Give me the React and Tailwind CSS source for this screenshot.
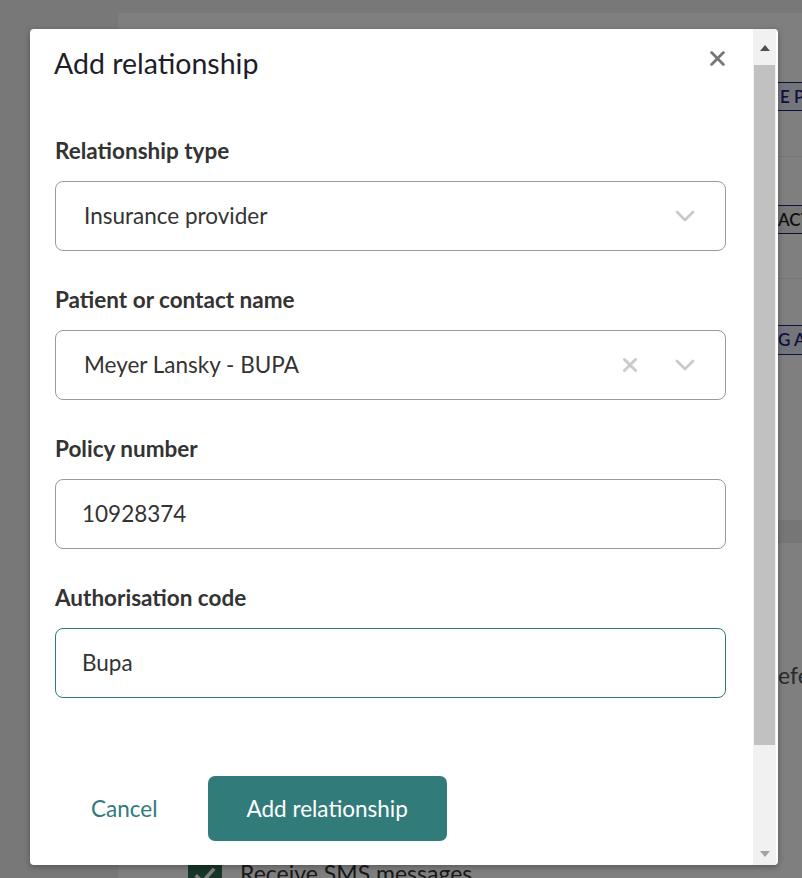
import React from "react";

const Chevron = () => (
  <svg width="20" height="12" viewBox="0 0 20 12" fill="none">
    <path d="M2 2l8 8 8-8" stroke="#c9c9c9" strokeWidth="2.6" strokeLinecap="round" strokeLinejoin="round" />
  </svg>
);

const Cross = ({ size = 14, color = "#777", width = 2.6 }) => (
  <svg width={size} height={size} viewBox="0 0 14 14" fill="none">
    <path d="M1.5 1.5l11 11M12.5 1.5l-11 11" stroke={color} strokeWidth={width} strokeLinecap="round" />
  </svg>
);

const Field = ({ label, children, focused }) => (
  <div className="flex flex-col">
    <label className="h-[30px] leading-[30px] text-[22.5px] font-bold text-[#333]">{label}</label>
    <div
      className={`mt-[15px] h-[70px] rounded-[8px] border flex items-center ${
        focused ? "border-[#2f7a78]" : "border-[#9a9a9a]"
      }`}
    >
      {children}
    </div>
  </div>
);

const Background = () => (
  <div className="ml-[118px] mt-[13px] bg-white text-[#1a237e]">
    <div className="h-[144px] border-b border-[#ececec] pt-[69px] pl-[660px]">
      <span className="inline-block h-[29px] leading-[27px] border-y border-[#1a237e] bg-[#e8eaf6] pl-[2px] pr-4 text-[17px] font-semibold whitespace-nowrap">E PAY</span>
    </div>
    <div className="h-[122px] border-b border-[#ececec] pt-[48px] pl-[648px]">
      <span className="inline-block h-[29px] leading-[27px] border-y border-[#1a237e] bg-[#eeeeee] pl-[12px] pr-4 text-[17px] font-semibold whitespace-nowrap text-[#222]">ACTIVE</span>
    </div>
    <div className="h-[241px] pt-[46px] pl-[658px]">
      <span className="inline-block h-[30px] leading-[28px] border-y border-[#1a237e] bg-[#e8eaf6] pl-[2px] pr-4 text-[17px] font-semibold whitespace-nowrap">G AGENT</span>
    </div>
    <div className="h-[23px] bg-[#ededed]" />
    <div className="h-[314px] pt-[115px] pl-[660px] text-[23px] text-[#555] whitespace-nowrap">
      efer
    </div>
    <div className="flex items-start gap-[18px] pl-[70px] pt-[2px]">
      <div className="w-[34px] h-[34px] bg-[#2e6b52] rounded-[2px] flex items-center justify-center">
        <svg width="24" height="24" viewBox="0 0 24 24" fill="none">
          <path d="M4 12.5l5.5 5.5L20 6" stroke="white" strokeWidth="3.5" strokeLinecap="square" />
        </svg>
      </div>
      <span className="text-[23px] leading-[28px] text-[#333]">Receive SMS messages</span>
    </div>
  </div>
);

export default function App() {
  return (
    <div
      className="relative h-[878px] w-full overflow-hidden bg-[#f0f0f0]"
      style={{ fontFamily: "Lato, 'Noto Sans', sans-serif" }}
    >
      <Background />
      <div className="absolute inset-0 bg-black/50" />
      <div className="absolute left-[30px] top-[29px] w-[748px] h-[836px] bg-white rounded-[4px] shadow-[0_2px_6px_rgba(0,0,0,0.3)] flex overflow-hidden">
        <div className="flex-1 flex flex-col pl-[25px] pr-[27px]">
          <div className="flex items-start justify-between pt-[17px]">
            <h2 className="h-[34px] leading-[34px] text-[28.5px] text-[#1e1e28] -ml-[1px]">Add relationship</h2>
            <button className="mt-[5px] mr-[1px]">
              <Cross size={15} />
            </button>
          </div>
          <div className="mt-[56px] flex flex-col gap-[34px]">
            <Field label="Relationship type">
              <span className="flex-1 pl-[28px] text-[22.5px] text-[#333]">Insurance provider</span>
              <span className="mr-[30px] flex"><Chevron /></span>
            </Field>
            <Field label="Patient or contact name">
              <span className="flex-1 pl-[28px] text-[22.5px] text-[#333]">Meyer Lansky - BUPA</span>
              <span className="mr-[38px] flex"><Cross size={14} color="#cbcbcb" width={3} /></span>
              <span className="mr-[30px] flex"><Chevron /></span>
            </Field>
            <Field label="Policy number">
              <span className="flex-1 pl-[26px] text-[22.5px] text-[#333]">10928374</span>
            </Field>
            <Field label="Authorisation code" focused>
              <span className="flex-1 pl-[26px] text-[22.5px] text-[#333]">Bupa</span>
            </Field>
          </div>
          <div className="mt-[78px] flex items-center gap-[14px]">
            <button className="h-[65px] px-9 text-[22.5px] text-[#317b7b]">Cancel</button>
            <button className="h-[65px] px-[39px] rounded-[7px] bg-[#327b7b] text-[22.5px] text-white">
              Add relationship
            </button>
          </div>
        </div>
        <div className="w-[23px] mr-[2px] bg-[#f1f1f1] flex flex-col items-center">
          <div className="h-[36px] flex items-center justify-center pt-[2px]">
            <svg width="10" height="6" viewBox="0 0 10 6"><path d="M0 6L5 0l5 6z" fill="#505050" /></svg>
          </div>
          <div className="w-[21px] h-[680px] bg-[#c1c1c1]" />
          <div className="flex-1 flex items-end pb-[8px]">
            <svg width="10" height="6" viewBox="0 0 10 6"><path d="M0 0h10L5 6z" fill="#a3a3a3" /></svg>
          </div>
        </div>
      </div>
    </div>
  );
}
